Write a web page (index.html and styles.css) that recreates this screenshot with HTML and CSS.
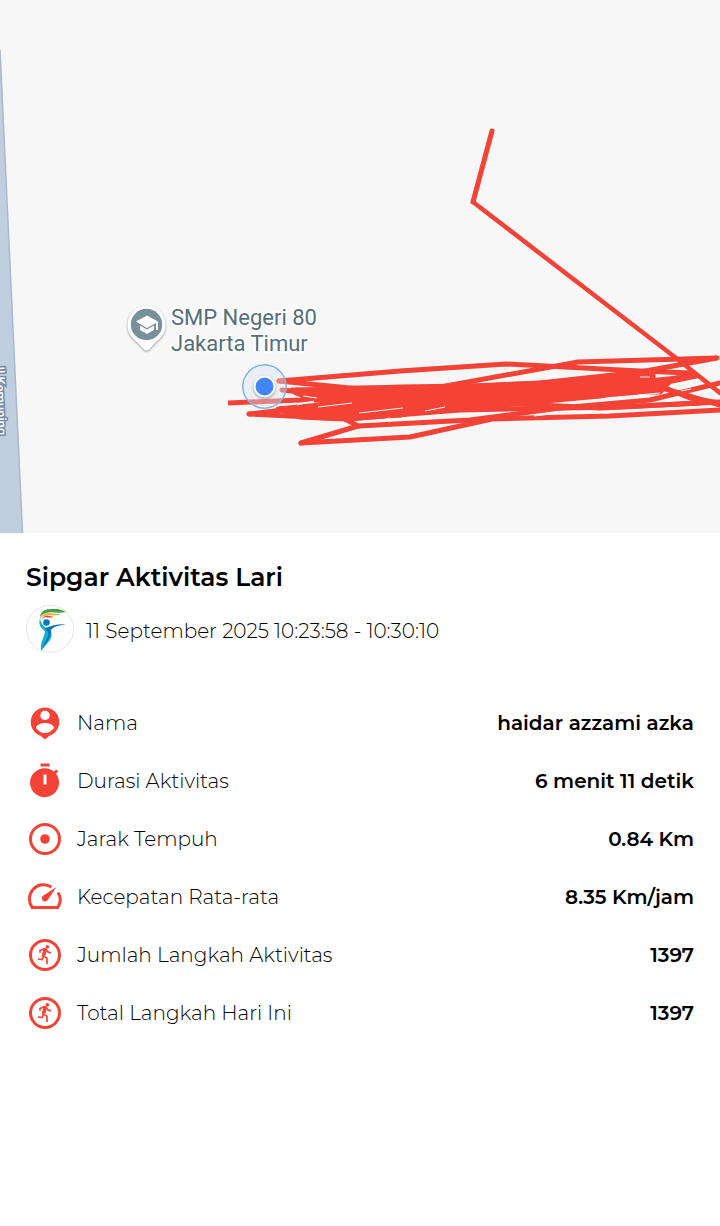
FILE: index.html
```html
<!DOCTYPE html>
<html lang="id">
<head>
    <meta charset="UTF-8">
    <meta name="viewport" content="width=device-width, initial-scale=1.0">
    <title>Sipgar Aktivitas Lari</title>
    <link rel="stylesheet" href="styles.css">
</head>
<body>
    <!-- Icons -->
    <svg class="icon-defs" aria-hidden="true">
        <symbol id="icon-run" viewBox="0 0 36 36">
            <circle cx="18" cy="18" r="14.5" fill="none" stroke="currentColor" stroke-width="3"/>
            <circle cx="20.3" cy="9.9" r="1.8" fill="currentColor"/>
            <path d="M13 15.8V13.5L17.5 11.7L19 12.2L21.2 15.2L24 15.8M18 12.5L15.7 18.5L20 21.3V27M16.2 19.5L15.2 22.6L11 22" fill="none" stroke="currentColor" stroke-width="1.7"/>
            <path d="M16.5 12L20 12.5L18.5 18.5L15 18Z" fill="currentColor"/>
        </symbol>
    </svg>

    <!-- Map -->
    <div class="map">
        <svg viewBox="0 0 720 533" preserveAspectRatio="xMidYMid slice" role="img" aria-label="Rute lari">
            <path d="M0 50L22.5 533H0Z" fill="#bfcfe0"/>
            <path d="M0 50L22.5 533" fill="none" stroke="#a9b9ce" stroke-width="1.5"/>
            <text class="street" transform="translate(-5 363) rotate(88)">Jl Kemuning</text>

            <g class="pin">
                <path d="M146.500 306a19 19 0 0 1 19 19.500c0 9-6 13.500-11 18l-5 5.500q-3 3-6 0l-5-5.500c-5-4.500-11-9-11-18a19 19 0 0 1 19-19.500Z" fill="#fff"/>
                <circle cx="146.500" cy="324.500" r="15.700" fill="#78909c"/>
                <path d="M136 321.500L147 315.500L158 321.500V330H156V323L147 328Z M140 325.500L147 329.500L154 325.500V330L147 334L140 330Z" fill="#fff"/>
            </g>
            <text class="place" x="171" y="325">SMP Negeri 80</text>
            <text class="place" x="171" y="351">Jakarta Timur</text>

            <g class="route">
                <path d="M492 131L473 202"/>
                <path d="M473 202L676 358L720 393" stroke-width="4.5"/>
                <path d="M228 403L300 400L360 394" stroke-linecap="butt"/>
                <path d="M279 381L400 371L506 364L640 371L690 373L655 386L720 405"/>
                <path d="M282 390L320 394L440 387L578 362L717 358L640 372L540 383L440 388L350 388L279 381"/>
                <path d="M249 414L330 418L480 407L600 396L696 376L640 382L480 398L280 409"/>
                <path d="M301 443L410 437L492 419L610 416L720 410"/>
                <path d="M301 443L358 426L345 419L460 410L620 407L720 402"/>
                <path d="M358 426L470 420L560 408L650 400L720 383"/>
                <path d="M249 414L300 408L390 401L500 403L600 408L700 403"/>
                <path d="M660 386L690 398L720 403"/>
                <path class="mass" d="M292 390L345 389L400 387L470 386L570 382L630 374L653 375L653 381L670 381L660 392L640 392L580 397L500 405L440 408L400 415L345 419L300 417L278 409L320 405L345 400L315 400L296 393Z"/>
            </g>
            <g class="gaps">
                <path d="M303 396L317 398"/>
                <path d="M297 405L314 401M318 407L352 403M359 413L403 408M374 422L390 418M425 411L445 407"/>
                <path d="M576 403L612 400M534 416L575 411M638 395L660 393M681 391L691 389M640 377L650 377"/>
            </g>

            <circle cx="264.500" cy="386.500" r="21.700" fill="#d1e4f3" fill-opacity=".4" stroke="#82b4e2" stroke-width="1.5"/>
            <circle class="dot" cx="264.500" cy="386.500" r="10" fill="#4285f4" stroke="#fff" stroke-width="2"/>
        </svg>
    </div>

    <!-- Activity detail -->
    <main class="detail">
        <h1>Sipgar Aktivitas Lari</h1>
        <div class="date-row">
            <svg class="logo" viewBox="0 0 48 48" aria-hidden="true">
                <circle cx="24" cy="24" r="23.5" fill="#fff" stroke="#e4e4e4"/>
                <path d="M14 12C15 3 24 4 30 4C35 4 37 6 40 7C32 9 25 6 20 8Q16 9 14 12Z" fill="#43a047"/>
                <path d="M14 13C17 8 23 7 29 9L35 9C29 12 24 9 19 11Q16 11 14 14Z" fill="#fbb034"/>
                <path d="M15 15Q18 10 23 11L28 12Q23 13 20 12Q17 12 15 15Z" fill="#e53935"/>
                <circle cx="20.5" cy="17.5" r="3.3" fill="#0878b8"/>
                <path d="M14 13C12 20 15 23 19 26C19 31 14 36 15 46C20 39 28 34 25 27C22 23 15 22 14 13Z" fill="#14b4d2"/>
                <path d="M18 23C24 22 30 18 40 19.500C33 20 27 22 25 25C26 33 19 38 16 45C17 37 24 32 22 27Z" fill="#0878b8"/>
            </svg>
            <p>11 September 2025 10:23:58 - 10:30:10</p>
        </div>

        <dl class="stats">
            <div class="stat">
                <svg class="icon" viewBox="0 0 36 36" aria-hidden="true">
                    <path fill-rule="evenodd" d="M18 2.500a14.500 14.500 0 0 1 4.500 28.200L18 34.500L13.500 30.700A14.500 14.500 0 0 1 18 2.500ZM18 5.700a4.700 4.700 0 1 0 0 9.400a4.700 4.700 0 1 0 0-9.400ZM18 18C13.500 18 9 20.200 9 23C11 26 14.500 28 18 28S25 26 27 23C27 20.200 22.500 18 18 18Z" fill="currentColor"/>
                </svg>
                <dt>Nama</dt>
                <dd>haidar azzami azka</dd>
            </div>
            <div class="stat">
                <svg class="icon" viewBox="0 0 36 36" aria-hidden="true">
                    <path fill-rule="evenodd" d="M13.500 0.500H22.500V3.500H13.500ZM18 5.200C21.500 5.200 24.700 6.500 27 8.500L29.300 6.500L31.200 8.500L29 10.800A14.500 14.500 0 1 1 18 5.200ZM16.500 11.500V21.500H19.500V11.500Z" fill="currentColor"/>
                </svg>
                <dt>Durasi Aktivitas</dt>
                <dd>6 menit 11 detik</dd>
            </div>
            <div class="stat">
                <svg class="icon" viewBox="0 0 36 36" aria-hidden="true">
                    <circle cx="18" cy="18" r="14.5" fill="none" stroke="currentColor" stroke-width="3"/>
                    <circle cx="18" cy="18" r="4.8" fill="currentColor"/>
                </svg>
                <dt>Jarak Tempuh</dt>
                <dd>0.84 Km</dd>
            </div>
            <div class="stat">
                <svg class="icon" viewBox="0 0 36 36" aria-hidden="true">
                    <path d="M24.500 8A14.300 14.300 0 0 0 5.200 28.500H30.800A14 14 0 0 0 31 13.500" fill="none" stroke="currentColor" stroke-width="3" stroke-linejoin="round"/>
                    <path d="M29.500 8L20.500 21.300A3.200 3.200 0 1 1 16 16.800Z" fill="currentColor"/>
                </svg>
                <dt>Kecepatan Rata-rata</dt>
                <dd>8.35 Km/jam</dd>
            </div>
            <div class="stat">
                <svg class="icon" aria-hidden="true"><use href="#icon-run"/></svg>
                <dt>Jumlah Langkah Aktivitas</dt>
                <dd>1397</dd>
            </div>
            <div class="stat">
                <svg class="icon" aria-hidden="true"><use href="#icon-run"/></svg>
                <dt>Total Langkah Hari Ini</dt>
                <dd>1397</dd>
            </div>
        </dl>
    </main>
</body>
</html>
```

FILE: styles.css
```css
:root {
    --primary: #f44336;
    --dark: #000;
    --land: #f7f7f7;
}
* {
    box-sizing: border-box;
    margin: 0;
    padding: 0;
}
body {
    background: #fff;
    color: var(--dark);
    font-family: Montserrat, Inter, sans-serif;
    font-size: 20px;
    line-height: 24px;
}
.icon-defs {
    display: none;
}
.map {
    background: var(--land);
}
.map svg {
    display: block;
    width: 100%;
}
.street {
    font: 500 13px Roboto, sans-serif;
    fill: #fff;
    stroke: #7388a3;
    stroke-width: 3px;
    paint-order: stroke;
}
.place {
    font: 400 22px Roboto, sans-serif;
    fill: #546e7a;
    stroke: #fff;
    stroke-width: 3px;
    paint-order: stroke;
}
.pin, .dot {
    filter: drop-shadow(0 1px 1px rgba(0,0,0,0.4));
}
.route {
    fill: none;
    stroke: var(--primary);
    stroke-width: 5px;
    stroke-linejoin: round;
    stroke-linecap: round;
}
.mass {
    fill: var(--primary);
}
.gaps {
    fill: none;
    stroke: var(--land);
    stroke-width: 1px;
}
.detail {
    padding: 28px 26px;
}
h1 {
    font-size: 25px;
    line-height: 32px;
    font-weight: 600;
}
.date-row {
    display: flex;
    align-items: center;
    gap: 12px;
    margin-top: 12px;
    font-weight: 300;
}
.date-row p {
    padding-top: 4px;
}
.logo {
    width: 48px;
    height: 48px;
    flex-shrink: 0;
}
.stats {
    margin-top: 41px;
}
.stat {
    display: flex;
    align-items: center;
    min-height: 58px;
}
.icon {
    width: 38px;
    height: 36px;
    flex-shrink: 0;
    color: var(--primary);
}
.stat dt {
    margin-left: 13px;
    font-weight: 300;
}
.stat dd {
    margin-left: auto;
    font-weight: 600;
    text-align: right;
}
```
